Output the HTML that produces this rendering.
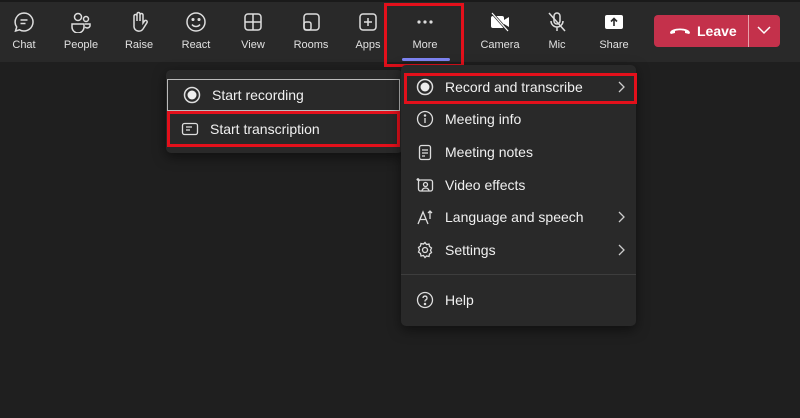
<!DOCTYPE html>
<html><head><meta charset="utf-8"><style>
*{margin:0;padding:0;box-sizing:border-box}
body{width:800px;height:418px;background:#1f1f1f;font-family:"Liberation Sans",sans-serif;position:relative;overflow:hidden;color:#fff}
.bar{position:absolute;left:0;top:0;width:800px;height:62px;background:#292929;border-top:2px solid #1a1a1a}
.it{position:absolute;top:11px;width:60px;margin-left:-30px;text-align:center;font-size:11px;color:#e0e0e0}
.it svg{display:block;margin:0 auto 6px;width:22px;height:22px}
.menu{position:absolute;background:#292929;border-radius:5px;box-shadow:0 4px 12px rgba(0,0,0,.5)}
.row{position:absolute;left:0;right:0;height:32px;font-size:14px;color:#f0f0f0;display:flex;align-items:center}
.row svg{width:18px;height:18px;margin-left:15px;margin-right:11px;flex:none}
.row svg.chev{position:absolute;right:10px;top:9px;width:10px;height:14px;margin:0}
.red{position:absolute;border:3px solid #e3101b}
</style></head><body>
<div class="bar"></div>
<div class="it" style="left:24px"><svg viewBox="0 0 22 22" fill="none" stroke="#ddd" stroke-width="1.5"><path d="M11 2a9 9 0 1 1-4.5 16.8L2.5 20l1.2-4A9 9 0 0 1 11 2z"/><path d="M7.5 9h7M7.5 12.5h5"/></svg>Chat</div>
<div class="it" style="left:81px"><svg viewBox="0 0 22 22" fill="none" stroke="#ddd" stroke-width="1.5"><circle cx="8" cy="6" r="3.5"/><circle cx="16" cy="8" r="2.5"/><path d="M2 13h12v3a5 5 0 0 1-12 0z"/><path d="M15 13h5v2a3 3 0 0 1-5 1"/></svg>People</div>
<div class="it" style="left:139px"><svg viewBox="0 0 22 22" fill="none" stroke="#ddd" stroke-width="1.5"><path d="M6 12V5a1.5 1.5 0 0 1 3 0v5V3a1.5 1.5 0 0 1 3 0v7V4a1.5 1.5 0 0 1 3 0v8l1.5-2a1.5 1.5 0 0 1 2.4 1.8L15 18a5 5 0 0 1-9-2z"/></svg>Raise</div>
<div class="it" style="left:196px"><svg viewBox="0 0 22 22" fill="none" stroke="#ddd" stroke-width="1.5"><circle cx="11" cy="11" r="9"/><path d="M7 13.5a5 5 0 0 0 8 0"/><circle cx="8" cy="8.5" r=".8" fill="#ddd"/><circle cx="14" cy="8.5" r=".8" fill="#ddd"/></svg>React</div>
<div class="it" style="left:253px"><svg viewBox="0 0 22 22" fill="none" stroke="#ddd" stroke-width="1.5"><rect x="3" y="3" width="16" height="16" rx="3"/><path d="M11 3v16M3 11h16"/></svg>View</div>
<div class="it" style="left:311px"><svg viewBox="0 0 22 22" fill="none" stroke="#ddd" stroke-width="1.5"><rect x="4" y="3" width="15" height="16" rx="3"/><rect x="4" y="11" width="7" height="8" rx="2"/></svg>Rooms</div>
<div class="it" style="left:368px"><svg viewBox="0 0 22 22" fill="none" stroke="#ddd" stroke-width="1.5"><rect x="3" y="3" width="16" height="16" rx="3"/><path d="M11 7v8M7 11h8"/></svg>Apps</div>
<div class="it" style="left:425px"><svg viewBox="0 0 22 22" fill="#ddd"><circle cx="5" cy="11" r="1.6"/><circle cx="11" cy="11" r="1.6"/><circle cx="17" cy="11" r="1.6"/></svg>More</div>
<div style="position:absolute;left:402px;top:58px;width:48px;height:3px;background:#7f85f5;border-radius:2px"></div>
<div class="red" style="left:384px;top:3px;width:80px;height:64px"></div>
<div class="it" style="left:500px"><svg viewBox="0 0 22 22" fill="#fff"><rect x="2" y="5" width="13" height="12" rx="2"/><path d="M15 9l5-3v10l-5-3z"/><path d="M3 2l16 18" stroke="#292929" stroke-width="2.5"/><path d="M3 2l16 18" stroke="#fff" stroke-width="1.2"/></svg>Camera</div>
<div class="it" style="left:557px"><svg viewBox="0 0 22 22" fill="none" stroke="#ddd" stroke-width="1.5"><rect x="8" y="2" width="6" height="11" rx="3"/><path d="M5 10a6 6 0 0 0 12 0M11 16v4M3 2l16 18"/></svg>Mic</div>
<div class="it" style="left:614px"><svg viewBox="0 0 22 22"><rect x="2" y="4" width="18" height="14" rx="2" fill="#fff"/><path d="M11 15V8M8 10.5l3-3 3 3" stroke="#292929" stroke-width="1.6" fill="none"/></svg>Share</div>
<div style="position:absolute;left:654px;top:15px;width:126px;height:32px;background:#c4314b;border-radius:4px"></div>
<div style="position:absolute;left:748px;top:15px;width:1px;height:32px;background:#e8a0ab"></div>
<svg style="position:absolute;left:669px;top:25px" width="22" height="10" viewBox="0 0 22 10"><path d="M1 8c0-6 20-6 20 0l-1 1-4-1v-2c-3-1-7-1-10 0v2l-4 1z" fill="#fff"/></svg>
<div style="position:absolute;left:697px;top:23px;font-size:14px;font-weight:bold">Leave</div>
<svg style="position:absolute;left:757px;top:26px" width="14" height="9" viewBox="0 0 14 9"><path d="M1 1l6 6 6-6" stroke="#fff" stroke-width="1.5" fill="none"/></svg>

<div class="menu" style="left:166px;top:70px;width:237px;height:83px">
<div class="row" style="top:9px;height:32px;left:1px;right:3px;border:1px solid #bbb"><svg viewBox="0 0 18 18"><circle cx="9" cy="9" r="7.5" fill="none" stroke="#ddd" stroke-width="1.5"/><circle cx="9" cy="9" r="4.5" fill="#eee"/></svg>Start recording</div>
<div class="row" style="top:43px"><svg viewBox="0 0 18 18" fill="none" stroke="#ddd" stroke-width="1.3"><rect x="1.5" y="3.5" width="15" height="11" rx="2"/><path d="M5 7h6M5 10h4"/></svg>Start transcription</div>
</div>
<div class="red" style="left:167px;top:111px;width:233px;height:36px"></div>

<div class="menu" style="left:401px;top:65px;width:235px;height:261px">
<div class="row" style="top:6px"><svg viewBox="0 0 18 18"><circle cx="9" cy="9" r="7.5" fill="none" stroke="#ddd" stroke-width="1.5"/><circle cx="9" cy="9" r="4.5" fill="#eee"/></svg>Record and transcribe<svg class="chev" viewBox="0 0 10 14"><path d="M3 2l5 5-5 5" stroke="#ccc" stroke-width="1.3" fill="none"/></svg></div>
<div class="row" style="top:38px"><svg viewBox="0 0 18 18" fill="none" stroke="#ddd" stroke-width="1.3"><circle cx="9" cy="9" r="7.5"/><path d="M9 8v5"/><circle cx="9" cy="5.5" r=".6" fill="#ddd"/></svg>Meeting info</div>
<div class="row" style="top:71px"><svg viewBox="0 0 18 18" fill="none" stroke="#ddd" stroke-width="1.3"><rect x="3.5" y="2.5" width="11" height="14" rx="2"/><path d="M6 7h6M6 10h6M6 13h3"/></svg>Meeting notes</div>
<div class="row" style="top:104px"><svg viewBox="0 0 18 18" fill="none" stroke="#ddd" stroke-width="1.3"><rect x="2.5" y="4" width="14" height="11" rx="2"/><circle cx="9.5" cy="8.5" r="2"/><path d="M6 15a3.5 3 0 0 1 7 0M2 2v3M.5 3.5h3"/></svg>Video effects</div>
<div class="row" style="top:136px"><svg viewBox="0 0 18 18" fill="none" stroke="#ddd" stroke-width="1.3"><path d="M2 16L7 4l5 12M4 11.5h6M14 3v8M12 5l2-2 2 2"/></svg>Language and speech<svg class="chev" viewBox="0 0 10 14"><path d="M3 2l5 5-5 5" stroke="#ccc" stroke-width="1.3" fill="none"/></svg></div>
<div class="row" style="top:169px"><svg viewBox="0 0 18 18" fill="none" stroke="#ddd" stroke-width="1.3"><circle cx="9" cy="9" r="2.5"/><path d="M9 1.5l1.5 2 2.5-.5.5 2.5 2 1.5-1 2.3 1 2.2-2 1.5-.5 2.5-2.5-.5L9 16.5l-1.5-2-2.5.5-.5-2.5-2-1.5 1-2.2-1-2.3 2-1.5.5-2.5 2.5.5z"/></svg>Settings<svg class="chev" viewBox="0 0 10 14"><path d="M3 2l5 5-5 5" stroke="#ccc" stroke-width="1.3" fill="none"/></svg></div>
<div style="position:absolute;left:0;right:0;top:209px;height:1px;background:#3d3d3d"></div>
<div class="row" style="top:219px"><svg viewBox="0 0 18 18" fill="none" stroke="#ddd" stroke-width="1.3"><circle cx="9" cy="9" r="7.5"/><path d="M7 7a2 2 0 1 1 2.5 2c-.5.2-.5.7-.5 1.5"/><circle cx="9" cy="13" r=".6" fill="#ddd"/></svg>Help</div>
</div>
<div class="red" style="left:404px;top:73px;width:233px;height:31px"></div>
</body></html>
